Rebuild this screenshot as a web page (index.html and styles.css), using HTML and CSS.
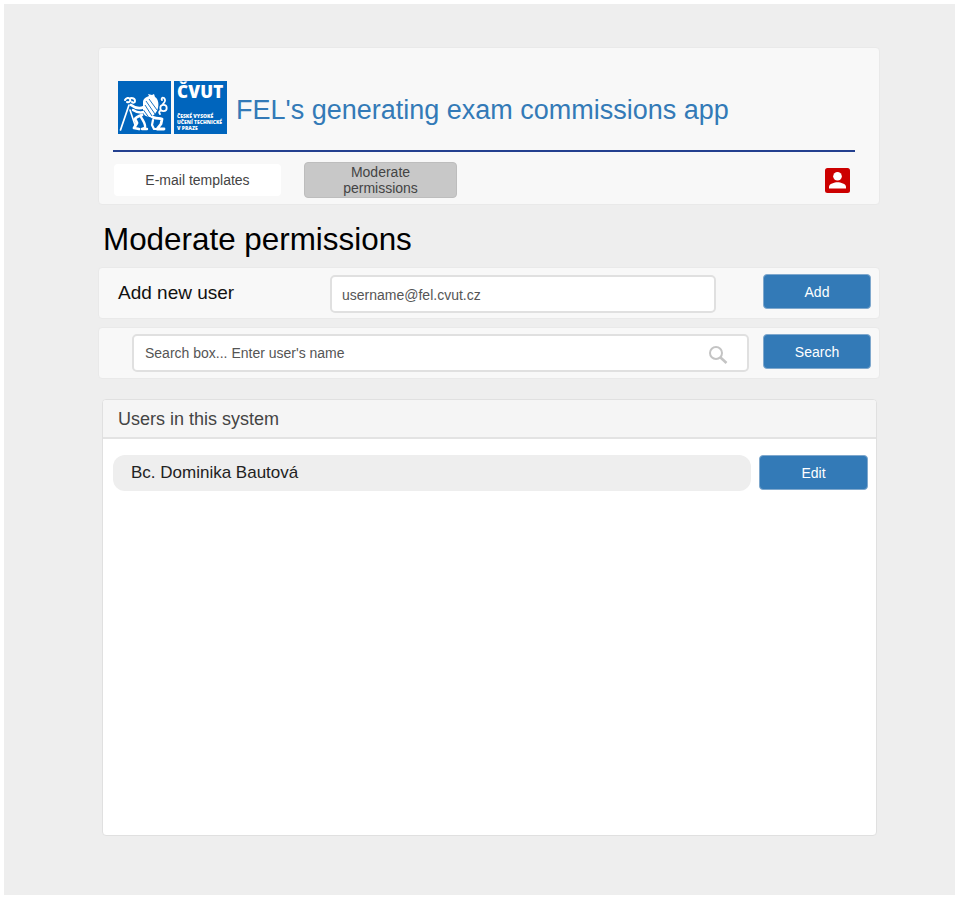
FILE: index.html
```html
<!DOCTYPE html>
<html lang="en">
<head>
<meta charset="utf-8">
<title>Moderate permissions</title>
<link rel="stylesheet" href="styles.css">
</head>
<body>
<div class="shell">
  <header class="card header">
    <div class="brand">
      <div class="logo">
        <div class="logo-lion">
          <svg width="53" height="53" viewBox="0 0 53 53">
            <g fill="none" stroke="#fff" stroke-linecap="round" stroke-linejoin="round">
              <path d="M2.500 49 11 24" stroke-width="1.700"/>
              <path d="M12 29 17 44" stroke-width="1.600"/>
              <path d="M7 19c1-2 4-3 5-1 1 2-1 4-3 3M13 17c2 0 4 1 4 3s-2 2-3 1" stroke-width="2"/>
              <path d="M13 24c4 3 9 4 13 2" stroke-width="2.800"/>
              <path d="M15 29c3 2 7 3 11 2" stroke-width="2.400"/>
              <path d="M24 34c-3 1-6 2-7 4l2 4-3 5 5 1" stroke-width="2.800"/>
              <path d="M23 36c2 4 5 7 4 11l-3 1h5" stroke-width="2.400"/>
              <path d="M33 35c3 3 8 2 11 3l-1 5-4 5h7" stroke-width="2.800"/>
              <path d="M35 39l-1 5 2 4h4" stroke-width="2.200"/>
              <circle cx="45.500" cy="27" r="3.200" stroke-width="1.800"/>
              <path d="M42 33c-1-1-1-2 0-3M45 23c2-2 3-4 1-6-2-1-3 1-2 2" stroke-width="1.800"/>
            </g>
            <path d="M25 21c0-3 3-5 6-6l-1-2 4 1 2-1 1 3c3 2 4 6 3 11-1 4-4 8-8 9-4 0-7-2-7-7 0-3 0-6 0-8z" fill="#fff"/>
            <path d="M27 24l7 11M28 20l9 13M31 18l8 11M25.500 29l5 7" fill="none" stroke="#0065bd" stroke-width=".9"/>
          </svg>
        </div>
        <div class="logo-name">
          <span class="logo-cvut">ČVUT</span>
          <span class="logo-small">ČESKÉ VYSOKÉ<br>UČENÍ TECHNICKÉ<br>V PRAZE</span>
        </div>
      </div>
      <span class="app-title">FEL's generating exam commissions app</span>
    </div>
    <nav class="nav">
      <a class="tab">E-mail templates</a>
      <a class="tab tab-active">Moderate permissions</a>
      <span class="user-icon">
        <svg width="25" height="25" viewBox="0 0 25 25">
          <rect width="25" height="25" rx="2.500" fill="#cc0000"/>
          <circle cx="12.500" cy="8.300" r="4.300" fill="#fff"/>
          <path d="M4 20.500v-1.600c0-3 5.500-4.600 8.500-4.600s8.500 1.600 8.500 4.600v1.600z" fill="#fff"/>
        </svg>
      </span>
    </nav>
  </header>

  <h1 class="page-title">Moderate permissions</h1>

  <section class="card row row-add">
    <span class="row-label">Add new user</span>
    <input class="field field-add" type="text" value="username@fel.cvut.cz">
    <button class="btn">Add</button>
  </section>

  <section class="card row row-search">
    <div class="field field-search">
      <span>Search box... Enter user's name</span>
      <svg width="20" height="20" viewBox="0 0 20 20" fill="none" stroke="#c4c4c4">
        <circle cx="8" cy="8" r="6" stroke-width="2"/>
        <path d="M12.500 12.500 18.500 18" stroke-width="2.600"/>
      </svg>
    </div>
    <button class="btn">Search</button>
  </section>

  <section class="panel">
    <div class="panel-head">Users in this system</div>
    <div class="panel-body">
      <div class="user-row">
        <span class="user-name">Bc. Dominika Bautová</span>
        <button class="btn btn-edit">Edit</button>
      </div>
    </div>
  </section>
</div>
</body>
</html>
```

FILE: styles.css
```css
* { box-sizing: border-box; }

html, body { margin: 0; background: #fff; }

body {
  padding: 4px 5px 5px 4px;
  font-family: "Liberation Sans", Arial, sans-serif;
  color: #444;
}

.shell {
  height: 891px;
  background: #eeeeee;
  padding: 43px 75px 0 94px;
  display: flex;
  flex-direction: column;
}

.card {
  background: #f8f8f8;
  border: 1px solid #e9e9e9;
  border-radius: 4px;
}

.header {
  height: 158px;
  padding: 33px 24px 0 14px;
  display: flex;
  flex-direction: column;
}

.brand {
  height: 71px;
  padding-left: 5px;
  display: flex;
  align-items: flex-start;
  gap: 9px;
  border-bottom: 2px solid #23408f;
}

.logo { display: flex; gap: 3px; width: 109px; height: 53px; flex: none; }

.logo-lion { width: 53px; height: 53px; background: #0065bd; }
.logo-lion svg { display: block; }

.logo-name {
  width: 53px;
  height: 53px;
  background: #0065bd;
  color: #fff;
  padding: 0 0 0 3px;
  display: flex;
  flex-direction: column;
  font-family: "Open Sans", "Liberation Sans", sans-serif;
  font-weight: 800;
}

.logo-cvut { font-size: 17px; line-height: 21px; letter-spacing: .2px; }
.logo-small { margin-top: 11px; font-size: 5px; line-height: 6px; white-space: nowrap; }

.app-title {
  margin-top: 13px;
  font-size: 27px;
  line-height: 32px;
  color: #337ab7;
}

.nav {
  flex: 1;
  display: flex;
  align-items: center;
  margin-left: 1px;
  padding-top: 4px;
}

.tab {
  width: 167px;
  height: 32px;
  background: #fff;
  border-radius: 4px;
  font-size: 14px;
  line-height: 16px;
  display: flex;
  align-items: center;
  justify-content: center;
  text-align: center;
}

.tab-active {
  width: 153px;
  height: 36px;
  margin-left: 23px;
  padding: 0 30px;
  background: #c8c8c8;
  border: 1px solid #bdbdbd;
  border-radius: 4px;
}

.user-icon { margin-left: auto; margin-right: 5px; display: flex; }

.page-title {
  margin: 16px 0 8px 5px;
  font-size: 31.400px;
  line-height: 38px;
  font-weight: 400;
  color: #000;
}

.row {
  height: 52px;
  display: flex;
  align-items: flex-start;
  padding-right: 8px;
}

.row .btn { margin-top: 6px; }

.row-add { margin-bottom: 8px; padding-left: 19px; }
.row-search { padding-left: 33px; }

.row-label {
  width: 212px;
  flex: none;
  margin-top: 12px;
  font-size: 19px;
  line-height: 26px;
  color: #111;
}

.field {
  height: 38px;
  margin-top: 7px;
  background: #fff;
  border: 2px solid #e0e0e0;
  border-radius: 5px;
  font-family: inherit;
  font-size: 14px;
  color: #555;
  padding: 0 10px;
}

.field-add { width: 386px; margin-right: 47px; outline: none; padding-top: 2px; }

.field-search {
  width: 617px;
  margin-top: 6px;
  margin-right: 14px;
  display: flex;
  align-items: center;
  justify-content: space-between;
  padding: 0 19px 0 11px;
}

.field-search svg { margin-top: 3px; }

.btn {
  width: 108px;
  height: 35px;
  flex: none;
  background: #337ab7;
  border: 1px solid #7fa8cd;
  border-radius: 4px;
  color: #fff;
  font-family: inherit;
  font-size: 14px;
  padding: 0;
}

.btn-edit { width: 109px; }

.panel {
  margin: 20px 3px 0 4px;
  height: 437px;
  background: #fff;
  border: 1px solid #e0e0e0;
  border-radius: 4px;
}

.panel-head {
  height: 39px;
  padding: 0 15px;
  background: #f5f5f5;
  border-bottom: 2px solid #e3e3e3;
  border-radius: 3px 3px 0 0;
  font-size: 18px;
  line-height: 38px;
  color: #444;
}

.panel-body { padding: 16px 8px 0 10px; }

.user-row { display: flex; align-items: flex-start; gap: 8px; }

.user-name {
  flex: 1;
  height: 36px;
  padding-left: 18px;
  background: #eeeeee;
  border-radius: 12px;
  font-size: 17px;
  line-height: 35px;
  color: #222;
}
```
